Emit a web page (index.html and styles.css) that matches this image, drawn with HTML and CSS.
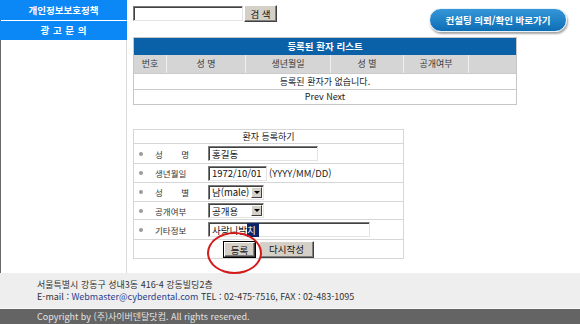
FILE: index.html
```html
<!DOCTYPE html>
<html lang="ko">
<head>
<meta charset="utf-8">
<title>환자 등록</title>
<link rel="stylesheet" href="styles.css">
</head>
<body>
<div class="layout">
  <aside class="side">
    <a class="menu menu-1" href="#">개인정보보호정책</a>
    <a class="menu menu-2" href="#">광 고 문 의</a>
  </aside>
  <main class="content">
    <div class="topbar">
      <div class="search">
        <input class="field search-field" type="text">
        <button class="btn btn-search" type="button">검 색</button>
      </div>
      <a class="consult" href="#">컨설팅 의뢰/확인 바로가기</a>
    </div>

    <div class="list">
      <div class="list-title">등록된 환자 리스트</div>
      <div class="list-head">
        <span>번호</span><span>성 명</span><span>생년월일</span><span>성 별</span><span>공개여부</span><span></span>
      </div>
      <div class="list-row row-empty">등록된 환자가 없습니다.</div>
      <div class="list-row row-pager">Prev Next</div>
    </div>

    <form class="reg">
      <div class="reg-title">환자 등록하기</div>
      <div class="frow r1">
        <div class="lbl"><i class="dot"></i><span class="lt">성 명</span></div>
        <input class="field f-name" type="text" value="홍길동">
      </div>
      <div class="frow r2">
        <div class="lbl"><i class="dot"></i><span class="lt">생년월일</span></div>
        <input class="field f-birth" type="text" value="1972/10/01"><span class="hint">(YYYY/MM/DD)</span>
      </div>
      <div class="frow r3">
        <div class="lbl"><i class="dot"></i><span class="lt">성 별</span></div>
        <div class="select"><span class="sv">남(male)</span><span class="arrow"></span></div>
      </div>
      <div class="frow r4">
        <div class="lbl"><i class="dot"></i><span class="lt">공개여부</span></div>
        <div class="select"><span class="sv">공개용</span><span class="arrow"></span></div>
      </div>
      <div class="frow r5">
        <div class="lbl"><i class="dot"></i><span class="lt">기타정보</span></div>
        <div class="field f-etc">사랑니발<span class="sel">치</span></div>
      </div>
      <div class="frow r6 actions">
        <button class="btn btn-ok" type="button">등록</button>
        <button class="btn btn-reset" type="button">다시작성</button>
      </div>
      <span class="circle"></span>
    </form>
  </main>
</div>
<footer class="footer">
  <div class="foot-info">
    <p>서울특별시 강동구 성내3동 416-4 강동빌딩2층</p>
    <p>E-mail : <a class="mail" href="#">Webmaster@cyberdental.com</a> TEL : 02-475-7516, FAX : 02-483-1095</p>
  </div>
  <div class="copy">Copyright by (주)사이버덴탈닷컴. All rights reserved.</div>
</footer>
</body>
</html>
```

FILE: styles.css
```css
* { box-sizing: border-box; }
html, body { margin: 0; padding: 0; }
body {
  font-family: "Noto Sans CJK KR", "Noto Sans", sans-serif;
  font-size: 9px;
  color: #333;
  background: #fff;
  width: 580px;
  overflow: hidden;
}
p { margin: 0; }

.layout { display: flex; height: 273px; }

.side {
  flex: none;
  width: 127px;
  border-left: 1px solid #6a6a6a;
  border-right: 1px solid #dadada;
  display: flex;
  flex-direction: column;
  gap: 1px;
}
.menu {
  display: block;
  margin: 0 -1px;
  background: #0b87f6;
  color: #fff;
  font-weight: bold;
  font-size: 9.5px;
  text-align: center;
  text-decoration: none;
}
.menu-1 { height: 20px; line-height: 20px; }
.menu-2 { height: 19px; line-height: 19px; word-spacing: 1px; }

.content {
  flex: 1;
  padding: 0 13px 0 6px;
  display: flex;
  flex-direction: column;
  align-items: flex-start;
}

.topbar {
  width: 100%;
  height: 37px;
  display: flex;
  justify-content: space-between;
  align-items: flex-start;
}
.search { display: flex; align-items: flex-start; margin-top: 5px; }

.field {
  font-family: inherit;
  font-size: 9.5px;
  color: #111;
  background: #fff;
  border: 1px solid;
  border-color: #7b7b7b #e4e4e4 #e4e4e4 #7b7b7b;
  box-shadow: inset 1px 1px 0 #404040;
  padding: 0 0 0 3px;
  margin: 0;
  outline: none;
}
.search-field { width: 110px; height: 15px; margin-top: 1px; }

.btn {
  font-family: inherit;
  font-size: 9.5px;
  color: #111;
  background: #d4d0c8;
  border: 1px solid;
  border-color: #fff #404040 #404040 #fff;
  box-shadow: inset -1px -1px 0 #808080;
  padding: 0;
  margin: 0;
}
.btn-search { width: 33px; height: 17px; margin-left: 1px; }

.consult {
  margin-top: 8px;
  width: 138px;
  height: 24px;
  border-radius: 12px;
  background: linear-gradient(#3597d8, #0d6db4);
  border: 1px solid #e8f2fa;
  box-shadow: 1px 2px 2px rgba(0,0,0,0.35);
  color: #fff;
  font-weight: bold;
  font-size: 9.5px;
  line-height: 22px;
  text-align: center;
  text-decoration: none;
}

.list {
  width: 384px;
  border: 1px solid #c6c6c6;
}
.list-title {
  height: 17px;
  line-height: 17px;
  background: #0b61a8;
  color: #fff;
  font-weight: bold;
  font-size: 9.5px;
  text-align: center;
}
.list-head {
  display: grid;
  grid-template-columns: 32px 79px 85px 73px 65px 1fr;
  height: 18px;
  background: #d5d5d5;
  color: #3a3a3a;
}
.list-head span {
  line-height: 18px;
  text-align: center;
  border-left: 1px solid #efefef;
}
.list-head span:first-child { border-left: 0; }
.list-row {
  border-top: 1px solid #cbcbcb;
  text-align: center;
  color: #222;
}
.row-empty { height: 16px; line-height: 15px; }
.row-pager { height: 15px; line-height: 14px; }

.reg {
  position: relative;
  margin: 24px 0 0;
  width: 271px;
  border: 1px solid #d6d6d6;
}
.reg-title {
  height: 13px;
  line-height: 13px;
  text-align: center;
  color: #222;
}
.frow {
  display: flex;
  align-items: center;
  border-top: 1px solid #d6d6d6;
}
.r1 { height: 20px; }
.r2 { height: 19px; }
.r3 { height: 19px; }
.r4 { height: 18px; }
.r5 { height: 20px; }
.r6 { height: 19px; }

.lbl {
  flex: none;
  width: 74px;
  display: flex;
  align-items: center;
  padding-left: 5px;
  color: #333;
}
.dot {
  display: block;
  flex: none;
  width: 4px;
  height: 4px;
  border-radius: 50%;
  background: #9a9a9a;
}
.lt {
  margin-left: 12px;
  width: 34px;
  font-size: 8.5px;
  white-space: nowrap;
  text-align: justify;
  text-align-last: justify;
}

.f-name { width: 110px; height: 15px; }
.f-birth { width: 59px; height: 15px; }
.hint { margin-left: 2px; font-size: 9.5px; color: #222; white-space: nowrap; }
.f-etc { width: 162px; height: 15px; line-height: 14px; white-space: nowrap; }
.sel { background: #0a246a; color: #fff; padding-right: 3px; }

.select {
  width: 56px;
  height: 15px;
  display: flex;
  align-items: center;
  border: 1px solid;
  border-color: #7b7b7b #e4e4e4 #e4e4e4 #7b7b7b;
  box-shadow: inset 1px 1px 0 #404040;
  background: #fff;
  padding: 1px 1px 1px 3px;
  font-size: 9.5px;
  color: #111;
}
.sv { flex: 1; white-space: nowrap; }
.arrow {
  position: relative;
  flex: none;
  width: 11px;
  height: 11px;
  background: #d4d0c8;
  border: 1px solid;
  border-color: #fff #404040 #404040 #fff;
}
.arrow::after {
  content: "";
  position: absolute;
  left: 2px;
  top: 3px;
  border-left: 3px solid transparent;
  border-right: 3px solid transparent;
  border-top: 3px solid #000;
}

.actions { justify-content: center; gap: 3px; }
.btn-ok {
  width: 33px;
  height: 17px;
  outline: 1px solid #000;
  outline-offset: -1px;
  border-width: 2px;
}
.btn-reset { width: 55px; height: 17px; }

.circle {
  position: absolute;
  left: 73px;
  top: 102px;
  width: 55px;
  height: 42px;
  border: 2px solid #d41b1b;
  border-radius: 50%;
  pointer-events: none;
}

.footer { width: 580px; }
.foot-info {
  height: 35px;
  background: #eeeeee;
  padding: 6px 0 0 37px;
  line-height: 12px;
  color: #333;
}
.mail { color: #2b3f8e; text-decoration: none; }
.copy {
  height: 20px;
  background: #646464;
  border-top: 1px solid #fafafa;
  color: #e2e2e2;
  line-height: 16px;
  padding-left: 37px;
}
```
